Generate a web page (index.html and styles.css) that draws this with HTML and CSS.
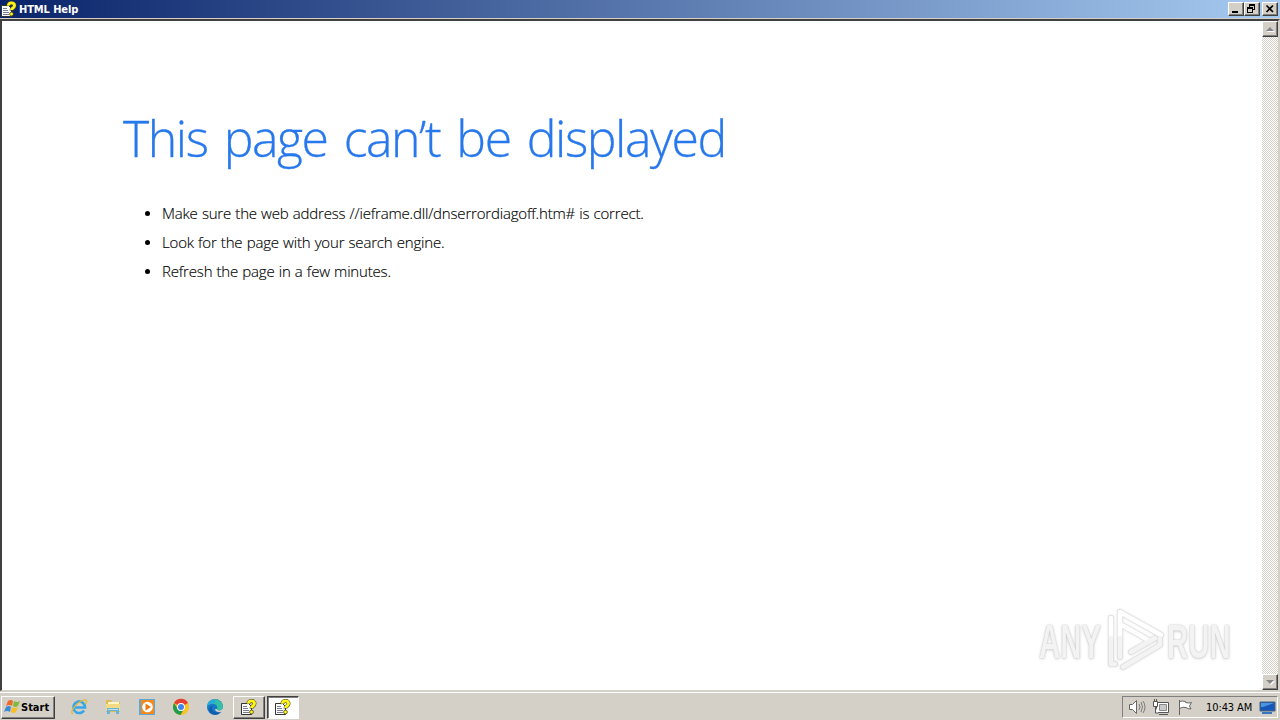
FILE: index.html
```html
<!DOCTYPE html>
<html lang="en">
<head>
<meta charset="utf-8">
<title>HTML Help</title>
<link rel="stylesheet" href="styles.css">
</head>
<body>
<svg width="0" height="0" class="defs">
  <symbol id="help" viewBox="0 0 16 16">
    <path d="M.5 4.500h7l3 3v8H.5z" fill="#fff" stroke="#333"/>
    <path d="M2 7.500h4M2 9.500h5M2 11.500h6M2 13.500h6" stroke="#555b78" stroke-width=".8"/>
    <path d="M7.500 5C7 1 13.500 1 13.500 4.500c0 2.500-3 2.500-3 5" fill="none" stroke="#4b4b18" stroke-width="4"/>
    <path d="M7.500 4.600C7 1 13.500 1 13.500 4.500c0 2.500-3 2.500-3 4.600" fill="none" stroke="#fff21a" stroke-width="2.900"/>
    <circle cx="10.500" cy="13" r="1.900" fill="#fff21a" stroke="#343410" stroke-width=".7"/>
  </symbol>
</svg>
<div class="desktop">
  <header class="titlebar">
    <svg class="icon16"><use href="#help"/></svg>
    <span class="title">HTML Help</span>
    <div class="controls">
      <button class="ctl"><svg width="14" height="12"><path d="M3 8h6v2H3z"/></svg></button>
      <button class="ctl"><svg width="14" height="12"><path d="M4 1h6v6H8V6h1V3H5v1H4zM2 4h6v6H2zM3 6v3h4V6z" fill-rule="evenodd"/></svg></button>
      <button class="ctl close"><svg width="14" height="12"><path d="M3.500 2.500l6.500 6.500M10 2.500L3.500 9" stroke="#000" stroke-width="1.700"/></svg></button>
    </div>
  </header>
  <main class="window">
    <section class="page">
      <h1>This page can’t be displayed</h1>
      <ul>
        <li>Make sure the web address //ieframe.dll/dnserrordiagoff.htm# is correct.</li>
        <li>Look for the page with your search engine.</li>
        <li>Refresh the page in a few minutes.</li>
      </ul>
      <div class="watermark">
        <span class="any">ANY</span>
        <svg class="play" width="62" height="68" viewBox="0 0 62 68" fill="none" stroke-linejoin="round" stroke-linecap="round">
          <g stroke="#dedede" stroke-width="6"><path d="M15 50V5l41 23-30 17M15 17l30 17M6 11v46h4M18 60l37-22v-7"/></g>
          <g stroke="#fff" stroke-width="4.600"><path d="M15 30V5l41 23M15 17l30 17M6 11v20"/></g>
          <g stroke="#f3f3f3" stroke-width="4.400"><path d="M15 31v19M26 45l24-14M6 31v26h4M18 60l37-22v-7"/></g>
        </svg>
        <span class="run">RUN</span>
      </div>
    </section>
    <aside class="scroll">
      <div class="arrow"><svg width="14" height="14"><path d="M7 5l4 4H3z" fill="#fff" transform="translate(1 1)"/><path d="M7 5l4 4H3z" fill="#858585"/></svg></div>
      <div class="arrow"><svg width="14" height="14"><path d="M3 5h8L7 9z" fill="#fff" transform="translate(1 1)"/><path d="M3 5h8L7 9z" fill="#858585"/></svg></div>
    </aside>
  </main>
  <footer class="taskbar">
    <button class="start">
      <svg width="17" height="16" viewBox="0 0 17 16"><path d="M4 2q3-2 5 0L8 7Q5 5 2 7z" fill="#ee6a2b"/><path d="M10 2q3 2 6 0l-2 5q-3 2-5 0z" fill="#82b83b"/><path d="M2 8q3-2 5 0l-1 5q-3-2-6 0z" fill="#3c8bd8"/><path d="M8 8q3 2 6 0l-2 5q-3 2-5 0z" fill="#f7bd27"/></svg>
      <span>Start</span>
    </button>
    <nav class="quick">
      <svg viewBox="0 0 18 18"><path d="M14 12.500A5.800 5.800 0 1 1 15 9.500H5" fill="none" stroke="#37a6e6" stroke-width="2.600"/><path d="M3 16C-2 14 10 1 16 2q2 1-1 4" fill="none" stroke="#e5b83a" stroke-width="1.300"/></svg>
      <svg viewBox="0 0 18 18"><path d="M2 2h5l1 2h8v10H2z" fill="#dfba55"/><path d="M4 4h11v5H4z" fill="#fff6c4"/><path d="M2 6h14v7H2z" fill="#f3da83"/><path d="M3 16v-6h12v6h-3v-3H6v3z" fill="#65b5dc"/><path d="M4 11h10v1H4z" fill="#b6e1f2"/></svg>
      <svg viewBox="0 0 18 18"><path d="M1 1h16v16H1z" fill="#5aa7d8"/><path d="M3 2h13v14H3z" fill="#f28a1c"/><circle cx="9.500" cy="9" r="5.300" fill="#fff"/><path d="M7.500 5.500L13 9l-5.500 3.500z" fill="#ed7910"/></svg>
      <svg viewBox="0 0 18 18"><circle cx="9" cy="9" r="8" fill="#fbc31d"/><path d="M9 9L2 5a8 8 0 0 1 14 0z" fill="#e34133"/><path d="M2 5a8 8 0 0 0 6.500 12L12 11H6z" fill="#249b4a"/><circle cx="9" cy="9" r="4" fill="#fff"/><circle cx="9" cy="9" r="3" fill="#4285e8"/></svg>
      <svg viewBox="0 0 18 18"><circle cx="9" cy="9" r="8" fill="#1679c6"/><path d="M1 8C3-1 16-1 17 9c0 4-6 4-6 2 2-5-6-7-10-3" fill="#35bfa5"/><path d="M1 8c1-5 5-6 8-6 2 1 0 3-3 4-2 0-4 1-5 2" fill="#28a9df"/><path d="M6 9c-1 5 5 7 9 4-3 5-10 5-12-1 0-3 2-4 4-4z" fill="#125cac"/><path d="M11 11c0 2 5 2 6-1v3l-2 1c-3 1-6-1-6-3z" fill="#d4d0c8"/></svg>
    </nav>
    <button class="task"><svg class="icon16"><use href="#help"/></svg></button>
    <button class="task active"><svg class="icon16"><use href="#help"/></svg></button>
    <div class="tray">
      <svg width="18" height="18" fill="#fff" stroke="#676767"><path d="M1.500 6.500h3l4-4v13l-4-4h-3z"/><path d="M11 6q2 3 0 6M13 4q3 5 0 10M15 3q4 6 0 12" fill="none" stroke-width=".8"/></svg>
      <svg width="18" height="18" fill="#fff" stroke="#555"><path d="M4.500 4.500h12v10h-12z"/><path d="M7.500 6.500h7v6h-7z" fill="#c9c9c9" stroke="#888"/><path d="M7 16.500h9M1.500 3.500h4v5h-4zM2.500 1v2M4.500 1v2M3.500 9v6h3"/></svg>
      <svg width="18" height="18" fill="#fff" stroke="#666"><path d="M3.500 17V2M3.500 3.500q3-1 6 0v1q3 1 6 0L13.500 8l1.500 3q-3 0-5-1.500-3-1-6.500 1"/></svg>
      <span class="clock">10:43 AM</span>
      <svg width="17" height="18"><path d="M1 4h15v9H1z" fill="#1557b8" stroke="#49647d"/><path d="M2 5h13L4 9H2z" fill="#4d94e0"/><path d="M3 15h10" stroke="#3477be" stroke-width="2"/></svg>
    </div>
  </footer>
</div>
</body>
</html>
```
FILE: styles.css
```css
* { box-sizing: border-box; }
body { margin: 0; overflow: hidden; font-family: "DejaVu Sans Condensed", "DejaVu Sans", sans-serif; }
button { padding: 0; border: 0; font: inherit; color: #000; }
svg { display: block; flex: none; }
.defs { position: absolute; }
.icon16 { width: 16px; height: 16px; }
.desktop { width: 1280px; height: 720px; display: flex; flex-direction: column; background: #d4d0c8; }
.titlebar { height: 18px; display: flex; align-items: center; padding: 0 2px 0 1px; background: linear-gradient(90deg, #0a246a, #a6caf0); }
.title { margin-left: 2px; color: #fff; font-size: 11px; font-weight: bold; letter-spacing: -.1px; }
.controls { display: flex; margin-left: auto; }
.ctl { width: 16px; height: 14px; background: #d4d0c8; border: 1px solid; border-color: #fff #404040 #404040 #fff; box-shadow: inset -1px -1px #808080; }
.close { margin-left: 2px; }
.window { height: 672px; display: flex; margin-top: 1px; border: solid; border-width: 2px 2px 1px; border-color: #404040 #d4d0c8 #d4d0c8 #404040; background: #fff; }
.page { width: 1260px; padding: 79px 0 0 121px; position: relative; }
h1 { margin: 0; height: 76px; line-height: 76px; font-family: "Open Sans", sans-serif; font-size: 50px; font-weight: 300; color: #2778ec; letter-spacing: -1.45px; word-spacing: 4.6px; white-space: nowrap; -webkit-text-stroke: .3px #2778ec; }
ul { margin: 23px 0 0; padding-left: 39px; font-family: "Open Sans", sans-serif; font-weight: 300; font-size: 15px; line-height: 29px; color: #000; }
li { height: 29px; letter-spacing: -.18px; word-spacing: .5px; -webkit-text-stroke: .15px #000; }
li::marker { font-size: 14px; }
.scroll { width: 16px; display: flex; flex-direction: column; justify-content: space-between; background: repeating-conic-gradient(#d4d0c8 0 25%, #fff 0 50%) 0 0 / 2px 2px; }
.arrow { width: 16px; height: 16px; background: #d4d0c8; border: 1px solid; border-color: #fff #404040 #404040 #fff; box-shadow: inset -1px -1px #808080; }
.watermark { position: absolute; left: 1037px; top: 586px; height: 68px; width: 198px; display: flex; align-items: center; font: bold 49px "Liberation Sans", sans-serif; }
.watermark span { flex: none; transform-origin: left; transform: scaleX(.6); color: #f3f3f3; text-shadow: 0 0 2px #bbb, 0 1px 4px #d5d5d5; }
.any { width: 66px; }
.run { width: 66px; }
.play { filter: drop-shadow(0 0 1px #ddd); }
.taskbar { height: 28px; margin-top: auto; display: flex; align-items: center; padding: 1px 2px 0 1px; border-top: 1px solid #fff; }
.start { width: 54px; height: 23px; display: flex; align-items: center; padding-left: 2px; background: #d4d0c8; border: 1px solid; border-color: #fff #404040 #404040 #fff; box-shadow: inset -1px -1px #808080; font-size: 11px; font-weight: bold; }
.quick { display: flex; gap: 16px; padding-left: 15px; width: 178px; }
.quick svg { width: 18px; height: 18px; }
.task { width: 32px; height: 23px; display: grid; place-items: center; background: #d4d0c8; border: 1px solid; border-color: #fff #404040 #404040 #fff; box-shadow: inset -1px -1px #808080; }
.active { margin-left: 2px; background: #fff; border-color: #404040 #fff #fff #404040; box-shadow: inset 1px 1px #808080; }
.tray { width: 156px; height: 22px; margin-left: auto; padding: 0 1px 0 5px; display: flex; align-items: center; gap: 6px; border: 1px solid; border-color: #808080 #fff #fff #808080; }
.clock { margin-left: 6px; width: 48px; font-size: 11px; letter-spacing: -.1px; white-space: nowrap; }
```
